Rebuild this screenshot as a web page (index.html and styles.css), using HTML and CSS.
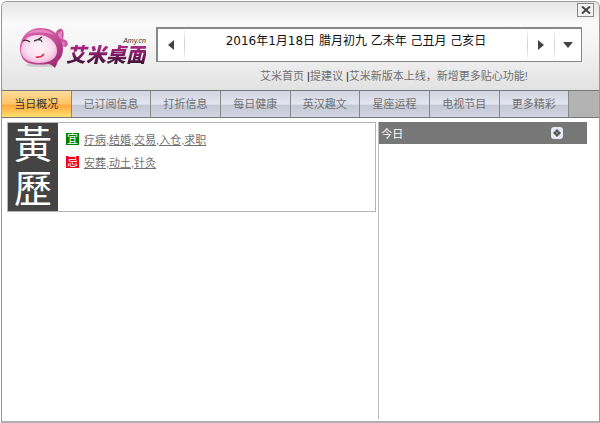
FILE: index.html
```html
<!DOCTYPE html>
<html lang="zh-CN">
<head>
  <meta charset="UTF-8" />
  <title>艾米桌面</title>
  <link rel="stylesheet" href="styles.css">
</head>
<body>

<div class="window">
  <header class="header">
    <div class="title-bar">
      <button class="close" type="button" aria-label="关闭">
        <svg width="10" height="8" viewBox="0 0 10 8"><path d="M1 0.5L9 7.5M9 0.5L1 7.5" stroke="#444" stroke-width="2" /></svg>
      </button>
    </div>

    <div class="header-main">
      <a class="logo" href="#">
        <svg class="logo-face" width="48" height="42" viewBox="0 0 48 42">
          <defs>
            <radialGradient id="skin" cx="0.5" cy="0.45" r="0.6">
              <stop offset="0" stop-color="#fff4fb" />
              <stop offset="0.6" stop-color="#fbdff0" />
              <stop offset="1" stop-color="#efa9d3" />
            </radialGradient>
            <linearGradient id="hood" x1="0" y1="0" x2="1" y2="1">
              <stop offset="0" stop-color="#dc68ad" />
              <stop offset="0.5" stop-color="#c9509a" />
              <stop offset="1" stop-color="#92206a" />
            </linearGradient>
          </defs>
          <ellipse cx="22" cy="38" rx="16" ry="2" fill="#bbb" opacity="0.6" />
          <path d="M35 10C35 5 38 1 42 2C44 4 44 8 43 12C47 13 49 16 47 19C44 21 41 19 39 17Z" fill="#c9569f" />
          <path d="M38 6L42 4V11L38 13ZM40 14L46 16L43 19Z" fill="#dd85bd" />
          <path d="M0 22C0 9 9 1 21 1C34 1 42 10 43 21C43 28 41 31 38 34L35 41C33 39 32 38 29 37C21 38 11 38 6 35C2 32 0 27 0 22Z" fill="url(#hood)" />
          <path d="M1 22C2 13 8 8 18 8C29 8 37 15 37 24C37 32 29 36 19 36C9 36 0 31 1 22Z" fill="url(#skin)" />
          <path d="M7 7C14 1 28 1 34 8C26 5 16 5 7 7Z" fill="#f09acc" opacity="0.7" />
          <path d="M3 14Q6 12 10 15M14 14Q18 13 22 10M18 13Q21 12 22 15" fill="none" stroke="#333" stroke-width="1.3" />
          <path d="M16 30Q21 31 24 27" fill="none" stroke="#e0364d" stroke-width="1.8" />
        </svg>
        <span class="logo-text">
          <small>Amy.cn</small>
          <b>艾米桌面</b>
        </span>
      </a>

      <div class="header-info">
        <div class="date-bar">
          <button type="button" aria-label="前一天">
            <svg width="6" height="10" viewBox="0 0 6 10"><path d="M6 0V10L0 5Z" fill="#444" /></svg>
          </button>
          <time class="date" datetime="2016-01-18">2016年1月18日 腊月初九 乙未年 己丑月 己亥日</time>
          <button type="button" aria-label="后一天">
            <svg width="6" height="10" viewBox="0 0 6 10"><path d="M0 0V10L6 5Z" fill="#444" /></svg>
          </button>
          <button type="button" aria-label="选择日期">
            <svg width="10" height="6" viewBox="0 0 10 6"><path d="M0 0H10L5 6Z" fill="#444" /></svg>
          </button>
        </div>
        <div class="links">
          <a href="#">艾米首页</a>
          <i>|</i><a href="#">提建议</a>
          <i>|</i><a href="#">艾米新版本上线，新增更多贴心功能!</a>
        </div>
      </div>
    </div>
  </header>

  <nav class="tabs">
    <a class="active" href="#">当日概况</a>
    <a href="#">已订阅信息</a>
    <a href="#">打折信息</a>
    <a href="#">每日健康</a>
    <a href="#">英汉趣文</a>
    <a href="#">星座运程</a>
    <a href="#">电视节目</a>
    <a href="#">更多精彩</a>
  </nav>

  <main class="content">
    <section class="almanac">
      <h2>黃歷</h2>
      <ul>
        <li><span class="badge good">宜</span><a href="#">疗病,结婚,交易,入仓,求职</a></li>
        <li><span class="badge bad">忌</span><a href="#">安葬,动土,针灸</a></li>
      </ul>
    </section>

    <aside class="today">
      <div class="today-head">
        <h3>今日</h3>
        <button type="button" aria-label="添加">
          <svg width="8" height="8" viewBox="0 0 8 8"><path d="M3 1H5V3H7V5H5V7H3V5H1V3H3Z" fill="#555" stroke="#555" /><path d="M3 4H5" stroke="#bbb" /></svg>
        </button>
      </div>
    </aside>
  </main>
</div>

</body>
</html>
```
FILE: styles.css
```css
* {
  box-sizing: border-box;
}

body {
  margin: 0;
  padding: 1px 0 0 1px;
  background: #fff;
  font-family: "Liberation Sans", "Noto Sans CJK SC", sans-serif;
  font-size: 11px;
  color: #707070;
}

a {
  color: inherit;
  text-decoration: none;
}

button {
  padding: 0;
  border: none;
  background: none;
  cursor: pointer;
}

svg {
  display: block;
}

.window {
  display: flex;
  flex-direction: column;
  min-height: calc(100vh - 1px);
  border: 1px solid #999;
  border-bottom: 2px solid #b0b0b0;
  border-radius: 6px 6px 0 0;
  overflow: hidden;
}

/* header */
.header {
  height: 88px;
  background: linear-gradient(#e6e6e6, #fafafa 25%, #f4f4f4 50%, #e2e2e2);
}

.title-bar {
  display: flex;
  justify-content: flex-end;
  height: 25px;
  padding: 1px 5px 0 0;
}

.close {
  display: flex;
  align-items: center;
  justify-content: center;
  width: 17px;
  height: 14px;
  border: 1px solid #888;
  background: #f4f4f4;
}

.header-main {
  display: flex;
  padding: 0 17px 0 18px;
}

.logo {
  display: flex;
  flex: none;
  width: 136px;
}

.logo-face {
  flex: none;
}

.logo-text {
  display: flex;
  flex-direction: column;
  padding-top: 10px;
  margin-left: -2px;
  white-space: nowrap;
}

.logo-text small {
  align-self: flex-end;
  font-size: 7px;
  line-height: 8px;
  font-style: italic;
  color: #333;
}

.logo-text b {
  font-size: 20px;
  line-height: 20px;
  font-style: italic;
  font-weight: 900;
  color: transparent;
  background: linear-gradient(#b02a88, #7a1c62 50%, #35102c);
  background-clip: text;
  -webkit-background-clip: text;
}

.header-info {
  flex: 1;
}

.date-bar {
  display: flex;
  height: 35px;
  border: 2px solid #888;
  border-right-width: 1px;
  border-bottom-width: 1px;
  background: #fff;
}

.date-bar button {
  display: flex;
  align-items: center;
  justify-content: center;
  width: 27px;
  border-left: 1px solid;
  border-image: linear-gradient(#fff, #ccc, #fff) 1;
}

.date-bar button:first-child {
  border-left: none;
  border-right: 1px solid;
}

.date {
  flex: 1;
  text-align: center;
  font-family: "DejaVu Sans", "Noto Sans CJK SC", sans-serif;
  font-size: 12px;
  line-height: 24px;
  color: #111;
  white-space: nowrap;
}

.links {
  padding-left: 104px;
  line-height: 28px;
  white-space: nowrap;
}

.links i {
  font-style: normal;
  color: #222;
}

/* tabs */
.tabs {
  display: grid;
  grid-template-columns: 7fr 8fr repeat(6, 7fr) 3fr;
  height: 28px;
  border-top: 1px solid #777;
  border-bottom: 1px solid #777;
  background: #b3b3b3;
}

.tabs a {
  border-right: 1px solid #888;
  background: linear-gradient(#d2d5e1, #e3e6f0 50%, #c4c7d4 55%, #d3d6e2);
  line-height: 26px;
  text-align: center;
  white-space: nowrap;
}

.tabs .active {
  background: linear-gradient(#fbdc9c, #ffc465 50%, #ffa83c 55%, #ffdf70);
  color: #333;
}

/* content */
.content {
  flex: 1;
  display: grid;
  grid-template-columns: minmax(0, 1fr) 36%;
  gap: 2px;
  padding: 4px 12px 2px 5px;
  background: #fff;
}

.almanac {
  display: flex;
  align-self: start;
  height: 90px;
  border: 1px solid #b5b5b5;
}

.almanac h2 {
  width: 50px;
  margin: 0;
  padding: 0 5px;
  background: #444;
  color: #fff;
  font-size: 38px;
  line-height: 44px;
  font-weight: 400;
  text-align: center;
}

.almanac ul {
  margin: 0;
  padding: 4px 8px;
  list-style: none;
}

.almanac li {
  display: flex;
  align-items: center;
  gap: 5px;
  height: 23px;
}

.almanac a {
  text-decoration: underline;
}

.badge {
  width: 13px;
  height: 12px;
  color: #fff;
  font-size: 11px;
  line-height: 12px;
  text-align: center;
}

.good {
  background: #008000;
}

.bad {
  background: #f00018;
}

.today {
  border-left: 1px solid #bbb;
}

.today-head {
  display: flex;
  align-items: center;
  justify-content: space-between;
  height: 22px;
  padding: 0 24px 0 2px;
  background: #777;
}

.today-head h3 {
  margin: 0;
  color: #fff;
  font-size: 11px;
  font-weight: 400;
}

.today-head button {
  display: flex;
  align-items: center;
  justify-content: center;
  width: 12px;
  height: 12px;
  border-radius: 3px;
  background: #e6e8f2;
}
```
